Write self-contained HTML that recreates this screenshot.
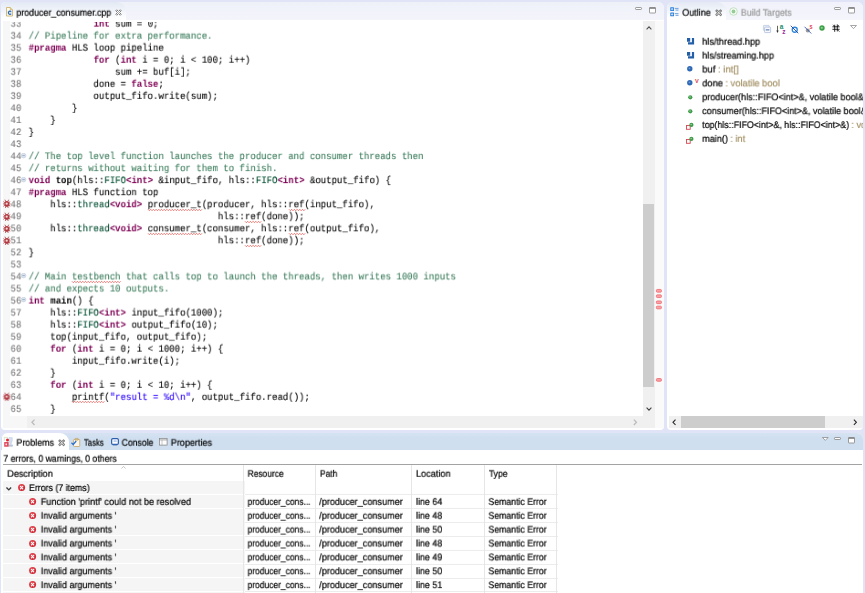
<!DOCTYPE html>
<html>
<head>
<meta charset="utf-8">
<title>producer_consumer.cpp</title>
<style>
html,body{margin:0;padding:0;}
body{width:865px;height:593px;overflow:hidden;background:#e0e4f6;font-family:"Liberation Sans",sans-serif;font-size:10px;color:#1a1a1a;position:relative;}
.abs{position:absolute;}
svg{position:absolute;overflow:visible;}
/* editor pane */
#ed{left:1.4px;top:2px;width:663.0px;height:428.1px;background:#fff;border-radius:5px 6px 4px 4px;overflow:hidden;}
#edtabbar{left:0;top:0;width:664px;height:18.2px;background:linear-gradient(#eff1f9,#f4f5fb);}
#edtab{left:0;top:0;width:124.9px;height:18.3px;background:linear-gradient(#e3e9f4,#f3f6fb 55%,#fff 90%);border-radius:4px 9px 0 0;}
.ui{left:0;top:0;will-change:transform;text-rendering:geometricPrecision;font-size:10.2px;white-space:pre;color:#080808;-webkit-text-stroke:0.22px;line-height:12px;transform-origin:0 0;}
#code{left:0;top:21px;width:643.1px;height:395.2px;overflow:hidden;}
#codein{left:0;top:-21px;}
.n,.c{position:absolute;left:0;top:0;will-change:transform;text-rendering:geometricPrecision;transform-origin:0 0;height:12.04px;line-height:12.04px;white-space:pre;font-family:"Liberation Mono",monospace;font-size:9.9px;color:#000;-webkit-text-stroke:0.12px;}
.n{color:#787878;}
b{font-weight:bold;color:#000;-webkit-text-stroke:0;}
.k{color:#7f0055;font-weight:bold;-webkit-text-stroke:0;}
.cm{color:#3f7f5f;}
.ty{color:#005032;}
.st{color:#2a00ff;}
.sq{}
.sb{background:#f0f0f0;}
.th{background:#cdcdcd;}
.mk{left:654.6px;width:4.4px;height:2.2px;border:0.7px solid #ef5860;border-radius:1.2px;background:#f7a3a7;box-sizing:content-box;}
</style>
</head>
<body>
<!-- ================= EDITOR ================= -->
<div id="ed" class="abs">
  <div id="edtabbar" class="abs"></div>
  <div id="edtab" class="abs"></div>
  <!-- annotation ruler bg -->
  <div class="abs" style="left:1.4px;top:19.4px;width:7.2px;height:406.4px;background:#f7f7f7;"></div>
  <div class="abs" style="left:8.6px;top:413.8px;width:17.2px;height:12px;background:#f7f7f7;"></div>
  <!-- file icon -->
  <svg viewBox="0 0 14 19" width="7" height="9.5" style="left:4.6px;top:5.2px"><path d="M1 1H8.5L13 5.5V18H1Z" fill="#fdfdf6" stroke="#c9ab5c" stroke-width="1.6" stroke-linejoin="round"/><path d="M8.5 1V5.5H13" fill="#f3e3a8" stroke="#c9ab5c" stroke-width="1.4"/><rect x="3" y="7" width="8.5" height="8" fill="#cfe0f2"/><path d="M10.3 9.3A3.2 3.2 0 1 0 10.3 13.7" fill="none" stroke="#2f66a8" stroke-width="2.2"/></svg>
  <!-- close icon -->
  <svg viewBox="0 0 14 14" width="7" height="7" style="left:113.6px;top:6.5px"><path d="M1.5 3.5L3.5 1.5L7 5L10.5 1.5L12.5 3.5L9 7L12.5 10.5L10.5 12.5L7 9L3.5 12.5L1.5 10.5L5 7Z" fill="#fdfdfd" stroke="#7c7c7c" stroke-width="1.9" stroke-linejoin="round"/></svg>
  <!-- min / max -->
  <svg viewBox="0 0 14 6" width="7" height="3" style="left:633.8px;top:5px"><rect x="1" y="1" width="12" height="4" rx="1.4" fill="#fff" stroke="#7d7d7d" stroke-width="1.5"/></svg>
  <svg viewBox="0 0 14 13" width="7" height="6.5" style="left:647.4px;top:5.1px"><rect x="1" y="1" width="12" height="11" rx="1" fill="#fff" stroke="#7d7d7d" stroke-width="1.5"/><rect x="1" y="1" width="12" height="2.6" fill="#7d7d7d"/></svg>
  <!-- vertical scrollbar -->
  <div class="abs sb" style="left:641.7px;top:19.4px;width:11.7px;height:406.2px;"></div>
  <div class="abs th" style="left:641.8px;top:202.2px;width:11.3px;height:182.5px;"></div>
  <svg viewBox="0 0 12 8" width="6" height="4" style="left:644.3px;top:24.2px"><path d="M1.2 6.6L6 1.8L10.8 6.6" fill="none" stroke="#505050" stroke-width="2.2"/></svg>
  <svg viewBox="0 0 12 8" width="6" height="4" style="left:644.3px;top:405.3px"><path d="M1.2 1.4L6 6.2L10.8 1.4" fill="none" stroke="#404040" stroke-width="2.2"/></svg>
  <!-- overview ruler -->
  <div class="abs" style="left:653.4px;top:19.4px;width:10px;height:406.2px;background:#fafafa;"></div>
  <svg width="6" height="400" viewBox="0 0 6 400" style="left:654.5px;top:0"><rect x="0.35" y="287.45" width="5.1" height="2.7" rx="1" fill="#f7a3a7" stroke="#ef5860" stroke-width="0.7"/><rect x="0.35" y="292.85" width="5.1" height="2.7" rx="1" fill="#f7a3a7" stroke="#ef5860" stroke-width="0.7"/><rect x="0.35" y="298.95" width="5.1" height="2.7" rx="1" fill="#f7a3a7" stroke="#ef5860" stroke-width="0.7"/><rect x="0.35" y="304.15" width="5.1" height="2.7" rx="1" fill="#f7a3a7" stroke="#ef5860" stroke-width="0.7"/><rect x="0.35" y="376.55" width="5.1" height="2.7" rx="1" fill="#f7a3a7" stroke="#ef5860" stroke-width="0.7"/></svg>
  <!-- horizontal scrollbar -->
  <div class="abs sb" style="left:25.8px;top:414.2px;width:616px;height:11.4px;"></div>
  <svg viewBox="0 0 8 12" width="4.4" height="6.6" style="left:29.6px;top:416.9px"><path d="M6.4 1.2L1.8 6L6.4 10.8" fill="none" stroke="#bcbcbc" stroke-width="2.4"/></svg>
  <svg viewBox="0 0 8 12" width="4.4" height="6.6" style="left:632px;top:416.9px"><path d="M1.6 1.2L6.2 6L1.6 10.8" fill="none" stroke="#bcbcbc" stroke-width="2.4"/></svg>
</div>

<!-- ================= OUTLINE ================= -->
<div id="ol" class="abs" style="left:667px;top:2px;width:195.6px;height:428.1px;background:#fff;border-radius:6px 6px 4px 4px;overflow:hidden;">
  <div class="abs" style="left:0;top:0;width:196px;height:18.3px;background:linear-gradient(#f0f1fa,#f5f6fc);"></div>
  <div class="abs" style="left:0;top:0;width:58.7px;height:18.3px;background:linear-gradient(#e3e9f4,#f3f6fb 50%,#fff 85%);border-radius:5px 9px 0 0;"></div>
  <!-- outline icon -->
  <svg viewBox="0 0 18 19" width="9" height="9.5" style="left:2.8px;top:5.4px"><rect x="0.5" y="0.5" width="7.5" height="7.5" rx="1" fill="#2f80d8"/><rect x="0.5" y="11" width="7.5" height="7.5" rx="1" fill="#2f80d8"/><path d="M4.25 2V6.5M2 4.25H6.5M4.25 12.5V17M2 14.75H6.5" stroke="#fff" stroke-width="1.3"/><path d="M9.5 2.8H17M11 6.2H17M9.5 13.3H17M11 16.7H17" stroke="#3f86d4" stroke-width="1.5"/></svg>
  <svg viewBox="0 0 14 14" width="7.4" height="7.4" style="left:47.9px;top:6.6px"><path d="M1.5 3.5L3.5 1.5L7 5L10.5 1.5L12.5 3.5L9 7L12.5 10.5L10.5 12.5L7 9L3.5 12.5L1.5 10.5L5 7Z" fill="#fdfdfd" stroke="#7c7c7c" stroke-width="1.9" stroke-linejoin="round"/></svg>
  <svg viewBox="0 0 18 18" width="9" height="9" style="left:61.8px;top:5px"><circle cx="9" cy="9" r="7.6" fill="#f6fbf6" stroke="#b7dbb7" stroke-width="1.6"/><circle cx="9" cy="9" r="3.8" fill="#96cd96"/></svg>
  <!-- min / max -->
  <svg viewBox="0 0 14 6" width="7" height="3" style="left:167.4px;top:5px"><rect x="1" y="1" width="12" height="4" rx="1.4" fill="#fff" stroke="#7d7d7d" stroke-width="1.5"/></svg>
  <svg viewBox="0 0 14 13" width="7" height="6.5" style="left:181.2px;top:5.1px"><rect x="1" y="1" width="12" height="11" rx="1" fill="#fff" stroke="#7d7d7d" stroke-width="1.5"/><rect x="1" y="1" width="12" height="2.6" fill="#7d7d7d"/></svg>
  <!-- toolbar -->
  <svg viewBox="0 0 16 16" width="8" height="8" style="left:96.3px;top:22.8px"><rect x="0.8" y="0.8" width="11.5" height="10" rx="1" fill="#eef2fa" stroke="#b7c6df" stroke-width="1.5"/><rect x="3.2" y="4.2" width="12" height="11" rx="1" fill="#f7f9fd" stroke="#a9bbd9" stroke-width="1.5"/><path d="M5.6 9.8H12.8" stroke="#4a6ea8" stroke-width="2"/></svg>
  <svg viewBox="0 0 20 18" width="10" height="9" style="left:109px;top:22.6px"><path d="M3 1.5V14" stroke="#333" stroke-width="1.5"/><path d="M0.6 11.2L3 15.8L5.4 11.2Z" fill="#333"/><text x="7.5" y="8.6" font-family="Liberation Sans" font-weight="bold" font-size="13" fill="#1c8c6a">a</text><text x="12.4" y="17.6" font-family="Liberation Sans" font-weight="bold" font-size="13" fill="#9a2aa0">z</text></svg>
  <svg viewBox="0 0 18 18" width="9" height="9" style="left:123.4px;top:22.8px"><circle cx="9.5" cy="9.5" r="5" fill="#fff" stroke="#2f86dc" stroke-width="2.6"/><path d="M1.5 1.5L16.5 16.5" stroke="#1f3f9a" stroke-width="1.7"/></svg>
  <svg viewBox="0 0 18 18" width="9" height="9" style="left:137px;top:22.6px"><circle cx="7.5" cy="11" r="4" fill="#9a9a9a"/><path d="M1 3.5L14.5 17" stroke="#2a4fb0" stroke-width="1.7"/><text x="11" y="7.2" font-family="Liberation Sans" font-weight="bold" font-size="9" fill="#e0304a">S</text></svg>
  <svg viewBox="0 0 12 12" width="6" height="6" style="left:152.2px;top:23.2px"><circle cx="6" cy="6" r="5.4" fill="#3da048"/><circle cx="5.6" cy="5.6" r="2.2" fill="#8fd08f"/></svg>
  <svg viewBox="0 0 16 16" width="8" height="8" style="left:165px;top:22.4px"><path d="M5.4 1.5V15.5M10.6 0.8V14.8M0.8 5.6H15.2M0.8 10.6H15.2" stroke="#111" stroke-width="1.8"/><path d="M2 1.5L5.4 5.6M10.6 10.6L15 15.5M10.6 5.6L14 2" stroke="#111" stroke-width="1.3"/></svg>
  <svg viewBox="0 0 14 8" width="7" height="4" style="left:183.2px;top:23.2px"><path d="M1 1H13L7 7.2Z" fill="#fff" stroke="#8a8a8a" stroke-width="1.5" stroke-linejoin="round"/></svg>
  <!-- item icons -->
  <svg viewBox="0 0 7.1 6.4" width="7.1" height="6.4" style="left:20.1px;top:36.3px"><path d="M0 0H3.2V3.7H0ZM4.9 0H7.1V6.4H1V4.2H4.9Z" fill="#235fa9"/></svg>
  <svg viewBox="0 0 7.1 6.4" width="7.1" height="6.4" style="left:20.1px;top:50.2px"><path d="M0 0H3.2V3.7H0ZM4.9 0H7.1V6.4H1V4.2H4.9Z" fill="#235fa9"/></svg>
  <svg viewBox="0 0 10 10" width="5.6" height="5.6" style="left:20.3px;top:64.2px"><circle cx="5" cy="5" r="4.8" fill="#2f68b4"/><circle cx="4.4" cy="4.2" r="1.6" fill="#6d9ad6"/></svg>
  <svg viewBox="0 0 10 10" width="5.6" height="5.6" style="left:20.3px;top:78.2px"><circle cx="5" cy="5" r="4.8" fill="#2f68b4"/><circle cx="4.4" cy="4.2" r="1.6" fill="#6d9ad6"/></svg>
  <div class="abs" style="left:27.9px;top:76.3px;font-size:5.6px;font-weight:bold;color:#d43a4a;line-height:6px;">V</div>
  <svg viewBox="0 0 10 10" width="4.6" height="4.6" style="left:21.1px;top:93px"><circle cx="5" cy="5" r="4.6" fill="#3f9a4a"/><circle cx="4.4" cy="4.2" r="1.7" fill="#9ad59a"/></svg>
  <svg viewBox="0 0 10 10" width="4.6" height="4.6" style="left:21.1px;top:106.9px"><circle cx="5" cy="5" r="4.6" fill="#3f9a4a"/><circle cx="4.4" cy="4.2" r="1.7" fill="#9ad59a"/></svg>
  <svg viewBox="0 0 16 16" width="8" height="8" style="left:18.6px;top:119.8px"><rect x="1" y="7" width="7.4" height="7.6" fill="#fff" stroke="#d8444f" stroke-width="1.8"/><circle cx="10.8" cy="5.8" r="4.2" fill="#3f9a4a"/><circle cx="10.2" cy="5" r="1.5" fill="#9ad59a"/></svg>
  <svg viewBox="0 0 16 16" width="8" height="8" style="left:18.6px;top:133.9px"><rect x="1" y="7" width="7.4" height="7.6" fill="#fff" stroke="#d8444f" stroke-width="1.8"/><circle cx="10.8" cy="5.8" r="4.2" fill="#3f9a4a"/><circle cx="10.2" cy="5" r="1.5" fill="#9ad59a"/></svg>
  <!-- h scrollbar -->
  <div class="abs sb" style="left:1.6px;top:414.4px;width:194px;height:11.3px;"></div>
  <div class="abs th" style="left:14px;top:414.4px;width:143.6px;height:11.3px;"></div>
  <svg viewBox="0 0 8 12" width="4.4" height="6.6" style="left:5.3px;top:416.7px"><path d="M6.4 1.2L1.8 6L6.4 10.8" fill="none" stroke="#2a2a2a" stroke-width="2"/></svg>
  <svg viewBox="0 0 8 12" width="4.4" height="6.6" style="left:186.2px;top:416.7px"><path d="M1.6 1.2L6.2 6L1.6 10.8" fill="none" stroke="#2a2a2a" stroke-width="2"/></svg>
</div>

<!-- ================= BOTTOM ================= -->
<div id="bt" class="abs" style="left:1.4px;top:432.6px;width:861.4px;height:165px;background:#fff;border-radius:6px 6px 0 0;overflow:hidden;">
  <div class="abs" style="left:0;top:0;width:862px;height:17.9px;background:linear-gradient(#d6e2f1,#cfdff0 30%,#cfdff0);"></div>
  <div class="abs" style="left:0.4px;top:0.2px;width:67px;height:17.8px;background:#fff;border-radius:5px 9px 0 0;"></div>
  <!-- problems icon -->
  <svg viewBox="0 0 18 20" width="9" height="10" style="left:2.6px;top:4.6px"><path d="M0.6 8V0.8H8" fill="none" stroke="#c9d2a4" stroke-width="1.2"/><path d="M10 1H16.6V7C16.6 9.5 14.6 10 14.6 12.5V15.5H17V18.4H9.6V15.5H11.6V12.5C11.600 10 9.8 9.5 9.8 7Z" fill="#d3e2f2" stroke="#b4c4d8" stroke-width="0.8"/><path d="M9.6 16.8H17.2V18.6H9.6Z" fill="#9fb0c4"/><rect x="0.4" y="9.8" width="9" height="9.8" rx="0.8" fill="#e2495c"/><rect x="3" y="13" width="3" height="3.4" fill="#fbe9ec"/><circle cx="7" cy="6.2" r="3" fill="#e8222c"/></svg>
  <svg viewBox="0 0 14 14" width="7.4" height="7.4" style="left:56.50px;top:6.20px"><path d="M1.5 3.5L3.5 1.5L7 5L10.5 1.5L12.5 3.5L9 7L12.5 10.5L10.5 12.5L7 9L3.5 12.5L1.5 10.5L5 7Z" fill="#fdfdfd" stroke="#7c7c7c" stroke-width="1.9" stroke-linejoin="round"/></svg>
  <!-- tasks icon -->
  <svg viewBox="0 0 19 18" width="9.5" height="9" style="left:70.10px;top:5.00px"><rect x="5" y="3" width="12.5" height="14" rx="1.5" fill="#fbf6ea" stroke="#c9a96a" stroke-width="1.7"/><rect x="8" y="0.8" width="6.5" height="3.6" rx="1" fill="#d8c08a" stroke="#b89858" stroke-width="1"/><path d="M1 9.5L4.4 13L10.5 6" fill="none" stroke="#2a6fd0" stroke-width="2.4"/></svg>
  <!-- console icon -->
  <svg viewBox="0 0 16 16" width="8" height="8" style="left:109.40px;top:5.60px"><rect x="1.3" y="1.3" width="13.4" height="11.4" rx="2.4" fill="#fff" stroke="#2c5cae" stroke-width="2.4"/><rect x="5" y="4.4" width="6.4" height="3.6" fill="#b9d0ee"/><path d="M3.5 14.6H12.5" stroke="#6f8fc6" stroke-width="1.6"/></svg>
  <!-- properties icon -->
  <svg viewBox="0 0 17 15" width="8.5" height="7.5" style="left:157.80px;top:5.80px"><rect x="0.8" y="0.8" width="15.4" height="13.4" fill="#fdfdfd" stroke="#858585" stroke-width="1.5"/><path d="M0.8 3.8H16.2" stroke="#858585" stroke-width="1.4"/><path d="M6 3.8V14.2" stroke="#a5a5a5" stroke-width="1.2"/></svg>
  <!-- view menu / min / max -->
  <svg viewBox="0 0 14 8" width="6.6" height="3.8" style="left:821.10px;top:4.30px"><path d="M1 1H13L7 7.2Z" fill="#fff" stroke="#7d7d7d" stroke-width="1.5" stroke-linejoin="round"/></svg>
  <svg viewBox="0 0 14 6" width="7" height="3" style="left:833.10px;top:4.60px"><rect x="1" y="1" width="12" height="4" rx="1.4" fill="#fff" stroke="#7d7d7d" stroke-width="1.5"/></svg>
  <svg viewBox="0 0 14 13" width="7" height="6.5" style="left:846.90px;top:4.50px"><rect x="1" y="1" width="12" height="11" rx="1" fill="#fff" stroke="#7d7d7d" stroke-width="1.5"/><rect x="1" y="1" width="12" height="2.6" fill="#7d7d7d"/></svg>
  <!-- sort arrow -->
  <svg viewBox="0 0 10 6" width="5" height="3" style="left:119.80px;top:33.00px"><path d="M0.8 5L5 1L9.2 5" fill="none" stroke="#a8a8a8" stroke-width="1.3"/></svg>
<div class="abs" style="left:2px;top:48.20px;width:241.4px;height:12.97px;background:#f5f5f5;"></div>
<div class="abs" style="left:2px;top:62.07px;width:241.4px;height:12.97px;background:#f5f5f5;"></div>
<div class="abs" style="left:2px;top:75.94px;width:241.4px;height:12.97px;background:#f5f5f5;"></div>
<div class="abs" style="left:2px;top:89.81px;width:241.4px;height:12.97px;background:#f5f5f5;"></div>
<div class="abs" style="left:2px;top:103.68px;width:241.4px;height:12.97px;background:#f5f5f5;"></div>
<div class="abs" style="left:2px;top:117.55px;width:241.4px;height:12.97px;background:#f5f5f5;"></div>
<div class="abs" style="left:2px;top:131.42px;width:241.4px;height:12.97px;background:#f5f5f5;"></div>
<div class="abs" style="left:2px;top:145.29px;width:241.4px;height:12.97px;background:#f5f5f5;"></div>
<div class="abs" style="left:2px;top:159.16px;width:241.4px;height:12.97px;background:#f5f5f5;"></div>
<div class="abs" style="left:244px;top:61.75px;width:313px;height:0.9px;background:#ececec;"></div>
<div class="abs" style="left:244px;top:75.62px;width:313px;height:0.9px;background:#ececec;"></div>
<div class="abs" style="left:244px;top:89.49px;width:313px;height:0.9px;background:#ececec;"></div>
<div class="abs" style="left:244px;top:103.36px;width:313px;height:0.9px;background:#ececec;"></div>
<div class="abs" style="left:244px;top:117.23px;width:313px;height:0.9px;background:#ececec;"></div>
<div class="abs" style="left:244px;top:131.10px;width:313px;height:0.9px;background:#ececec;"></div>
<div class="abs" style="left:244px;top:144.97px;width:313px;height:0.9px;background:#ececec;"></div>
<div class="abs" style="left:244px;top:158.84px;width:313px;height:0.9px;background:#ececec;"></div>
<div class="abs" style="left:244px;top:172.71px;width:313px;height:0.9px;background:#ececec;"></div>
<div class="abs" style="left:242.05px;top:32.60px;width:0.9px;height:140px;background:#e6e6e6;"></div>
<div class="abs" style="left:313.75px;top:32.60px;width:0.9px;height:140px;background:#e6e6e6;"></div>
<div class="abs" style="left:410.05px;top:32.60px;width:0.9px;height:140px;background:#e6e6e6;"></div>
<div class="abs" style="left:482.65px;top:32.60px;width:0.9px;height:140px;background:#e6e6e6;"></div>
<div class="abs" style="left:555.05px;top:32.60px;width:0.9px;height:140px;background:#e6e6e6;"></div>
<svg viewBox="0 0 6 4" width="5.6" height="3.6" style="left:5.10px;top:54.10px"><path d="M0.4 0.5L3 3.2L5.6 0.5" stroke="#3a3a3a" stroke-width="1.5" fill="none"/></svg>
<svg viewBox="0 0 8 8" width="7.2" height="7.2" style="left:16.20px;top:51.30px"><defs><radialGradient id="eg1" cx="0.4" cy="0.35" r="0.7"><stop offset="0" stop-color="#ee5b60"/><stop offset="1" stop-color="#c8202c"/></radialGradient></defs><circle cx="4" cy="4" r="3.9" fill="url(#eg1)"/><path d="M2.7 2.6L5.3 5.4M5.3 2.6L2.7 5.4" stroke="#fff" stroke-width="1.15" stroke-linecap="round"/></svg>
<svg viewBox="0 0 8 8" width="7.2" height="7.2" style="left:27.70px;top:65.40px"><defs><radialGradient id="eg2" cx="0.4" cy="0.35" r="0.7"><stop offset="0" stop-color="#ee5b60"/><stop offset="1" stop-color="#c8202c"/></radialGradient></defs><circle cx="4" cy="4" r="3.9" fill="url(#eg2)"/><path d="M2.7 2.6L5.3 5.4M5.3 2.6L2.7 5.4" stroke="#fff" stroke-width="1.15" stroke-linecap="round"/></svg>
<svg viewBox="0 0 8 8" width="7.2" height="7.2" style="left:27.70px;top:79.27px"><defs><radialGradient id="eg3" cx="0.4" cy="0.35" r="0.7"><stop offset="0" stop-color="#ee5b60"/><stop offset="1" stop-color="#c8202c"/></radialGradient></defs><circle cx="4" cy="4" r="3.9" fill="url(#eg3)"/><path d="M2.7 2.6L5.3 5.4M5.3 2.6L2.7 5.4" stroke="#fff" stroke-width="1.15" stroke-linecap="round"/></svg>
<svg viewBox="0 0 8 8" width="7.2" height="7.2" style="left:27.70px;top:93.14px"><defs><radialGradient id="eg4" cx="0.4" cy="0.35" r="0.7"><stop offset="0" stop-color="#ee5b60"/><stop offset="1" stop-color="#c8202c"/></radialGradient></defs><circle cx="4" cy="4" r="3.9" fill="url(#eg4)"/><path d="M2.7 2.6L5.3 5.4M5.3 2.6L2.7 5.4" stroke="#fff" stroke-width="1.15" stroke-linecap="round"/></svg>
<svg viewBox="0 0 8 8" width="7.2" height="7.2" style="left:27.70px;top:107.01px"><defs><radialGradient id="eg5" cx="0.4" cy="0.35" r="0.7"><stop offset="0" stop-color="#ee5b60"/><stop offset="1" stop-color="#c8202c"/></radialGradient></defs><circle cx="4" cy="4" r="3.9" fill="url(#eg5)"/><path d="M2.7 2.6L5.3 5.4M5.3 2.6L2.7 5.4" stroke="#fff" stroke-width="1.15" stroke-linecap="round"/></svg>
<svg viewBox="0 0 8 8" width="7.2" height="7.2" style="left:27.70px;top:120.88px"><defs><radialGradient id="eg6" cx="0.4" cy="0.35" r="0.7"><stop offset="0" stop-color="#ee5b60"/><stop offset="1" stop-color="#c8202c"/></radialGradient></defs><circle cx="4" cy="4" r="3.9" fill="url(#eg6)"/><path d="M2.7 2.6L5.3 5.4M5.3 2.6L2.7 5.4" stroke="#fff" stroke-width="1.15" stroke-linecap="round"/></svg>
<svg viewBox="0 0 8 8" width="7.2" height="7.2" style="left:27.70px;top:134.75px"><defs><radialGradient id="eg7" cx="0.4" cy="0.35" r="0.7"><stop offset="0" stop-color="#ee5b60"/><stop offset="1" stop-color="#c8202c"/></radialGradient></defs><circle cx="4" cy="4" r="3.9" fill="url(#eg7)"/><path d="M2.7 2.6L5.3 5.4M5.3 2.6L2.7 5.4" stroke="#fff" stroke-width="1.15" stroke-linecap="round"/></svg>
<svg viewBox="0 0 8 8" width="7.2" height="7.2" style="left:27.70px;top:148.62px"><defs><radialGradient id="eg8" cx="0.4" cy="0.35" r="0.7"><stop offset="0" stop-color="#ee5b60"/><stop offset="1" stop-color="#c8202c"/></radialGradient></defs><circle cx="4" cy="4" r="3.9" fill="url(#eg8)"/><path d="M2.7 2.6L5.3 5.4M5.3 2.6L2.7 5.4" stroke="#fff" stroke-width="1.15" stroke-linecap="round"/></svg>
  <div class="abs" style="left:1.6px;top:31.60px;width:859px;height:1px;background:#a3a3a3;"></div>
</div>
<!-- ================= TEXT OVERLAYS (integer-aligned) ================= -->
<div id="code" class="abs"><div id="codein" class="abs">
<span class="n" style="transform:translate(10.50px,18.59px) scale(0.9127,1.000)">33</span><span class="c" style="transform:translate(28.60px,18.59px) scale(0.9127,1.000)">            <span class="k">int</span> sum = 0;</span>
<span class="n" style="transform:translate(10.50px,30.63px) scale(0.9127,1.000)">34</span><span class="c" style="transform:translate(28.60px,30.63px) scale(0.9127,1.000)"><span class="cm">// Pipeline for extra performance.</span></span>
<span class="n" style="transform:translate(10.50px,42.67px) scale(0.9127,1.000)">35</span><span class="c" style="transform:translate(28.60px,42.67px) scale(0.9127,1.000)"><span class="k">#pragma</span> HLS loop pipeline</span>
<span class="n" style="transform:translate(10.50px,54.71px) scale(0.9127,1.000)">36</span><span class="c" style="transform:translate(28.60px,54.71px) scale(0.9127,1.000)">            <span class="k">for</span> (<span class="k">int</span> i = 0; i &lt; 100; i++)</span>
<span class="n" style="transform:translate(10.50px,66.75px) scale(0.9127,1.000)">37</span><span class="c" style="transform:translate(28.60px,66.75px) scale(0.9127,1.000)">                sum += buf[i];</span>
<span class="n" style="transform:translate(10.50px,78.79px) scale(0.9127,1.000)">38</span><span class="c" style="transform:translate(28.60px,78.79px) scale(0.9127,1.000)">            done = <span class="k">false</span>;</span>
<span class="n" style="transform:translate(10.50px,90.83px) scale(0.9127,1.000)">39</span><span class="c" style="transform:translate(28.60px,90.83px) scale(0.9127,1.000)">            output_fifo.write(sum);</span>
<span class="n" style="transform:translate(10.50px,102.87px) scale(0.9127,1.000)">40</span><span class="c" style="transform:translate(28.60px,102.87px) scale(0.9127,1.000)">        }</span>
<span class="n" style="transform:translate(10.50px,114.91px) scale(0.9127,1.000)">41</span><span class="c" style="transform:translate(28.60px,114.91px) scale(0.9127,1.000)">    }</span>
<span class="n" style="transform:translate(10.50px,126.95px) scale(0.9127,1.000)">42</span><span class="c" style="transform:translate(28.60px,126.95px) scale(0.9127,1.000)">}</span>
<span class="n" style="transform:translate(10.50px,138.99px) scale(0.9127,1.000)">43</span>
<span class="n" style="transform:translate(10.50px,151.03px) scale(0.9127,1.000)">44</span><svg class="fold" style="left:21.3px;top:152.53px" viewBox="0 0 10 10" width="5.2" height="5.2"><circle cx="5" cy="5" r="4.5" fill="#dce5f0" stroke="#b7c4d8" stroke-width="1"/><path d="M2.6 5H7.4" stroke="#7f93b0" stroke-width="1.3"/></svg><span class="c" style="transform:translate(28.60px,151.03px) scale(0.9127,1.000)"><span class="cm">// The top level function launches the producer and consumer threads then</span></span>
<span class="n" style="transform:translate(10.50px,163.07px) scale(0.9127,1.000)">45</span><span class="c" style="transform:translate(28.60px,163.07px) scale(0.9127,1.000)"><span class="cm">// returns without waiting for them to finish.</span></span>
<span class="n" style="transform:translate(10.50px,175.11px) scale(0.9127,1.000)">46</span><svg class="fold" style="left:21.3px;top:176.61px" viewBox="0 0 10 10" width="5.2" height="5.2"><circle cx="5" cy="5" r="4.5" fill="#dce5f0" stroke="#b7c4d8" stroke-width="1"/><path d="M2.6 5H7.4" stroke="#7f93b0" stroke-width="1.3"/></svg><span class="c" style="transform:translate(28.60px,175.11px) scale(0.9127,1.000)"><span class="k">void</span> <b>top</b>(hls::<span class="ty">FIFO</span><span class="k">&lt;int&gt;</span> &amp;input_fifo, hls::<span class="ty">FIFO</span><span class="k">&lt;int&gt;</span> &amp;output_fifo) {</span>
<span class="n" style="transform:translate(10.50px,187.15px) scale(0.9127,1.000)">47</span><span class="c" style="transform:translate(28.60px,187.15px) scale(0.9127,1.000)"><span class="k">#pragma</span> HLS function top</span>
<svg class="bug" style="left:2.7px;top:199.49px" viewBox="-0.4 0 7.6 9.4" width="7.6" height="9.4"><path d="M2.4 2.6L1.5 0.7M4.4 2.6L5.3 0.7M1.4 3.7L0 2.7M5.4 3.7L6.8 2.7M1.1 4.9H-0.3M5.7 4.9H7.1M1.4 6.1L0 7.3M5.4 6.1L6.8 7.3M2.6 7.4L2 8.9M4.2 7.4L4.8 8.9" stroke="#a8323a" stroke-width="0.8" fill="none"/><ellipse cx="3.4" cy="4.9" rx="2.5" ry="2.9" fill="#b23840"/><circle cx="3.3" cy="4.7" r="1.15" fill="#f3d6d6"/></svg><span class="n" style="transform:translate(10.50px,199.19px) scale(0.9127,1.000)">48</span><span class="c" style="transform:translate(28.60px,199.19px) scale(0.9127,1.000)">    hls::<span class="ty">thread</span><span class="k">&lt;void&gt;</span> <span class="sq">producer_t</span>(producer, hls::<span class="sq">ref</span>(input_fifo),</span><svg width="54.20" height="2" style="left:147.84px;top:208.59px"><polyline points="0.00,0.30 1.35,1.70 2.70,0.30 4.05,1.70 5.40,0.30 6.75,1.70 8.10,0.30 9.45,1.70 10.80,0.30 12.15,1.70 13.50,0.30 14.85,1.70 16.20,0.30 17.55,1.70 18.90,0.30 20.25,1.70 21.60,0.30 22.95,1.70 24.30,0.30 25.65,1.70 27.00,0.30 28.35,1.70 29.70,0.30 31.05,1.70 32.40,0.30 33.75,1.70 35.10,0.30 36.45,1.70 37.80,0.30 39.15,1.70 40.50,0.30 41.85,1.70 43.20,0.30 44.55,1.70 45.90,0.30 47.25,1.70 48.60,0.30 49.95,1.70 51.30,0.30 52.65,1.70 54.00,0.30" fill="none" stroke="#e8514a" stroke-width="0.75"/></svg><svg width="16.26" height="2" style="left:288.76px;top:208.59px"><polyline points="0.00,0.30 1.35,1.70 2.70,0.30 4.05,1.70 5.40,0.30 6.75,1.70 8.10,0.30 9.45,1.70 10.80,0.30 12.15,1.70 13.50,0.30 14.85,1.70 16.20,0.30" fill="none" stroke="#e8514a" stroke-width="0.75"/></svg>
<svg class="bug" style="left:2.7px;top:211.53px" viewBox="-0.4 0 7.6 9.4" width="7.6" height="9.4"><path d="M2.4 2.6L1.5 0.7M4.4 2.6L5.3 0.7M1.4 3.7L0 2.7M5.4 3.7L6.8 2.7M1.1 4.9H-0.3M5.7 4.9H7.1M1.4 6.1L0 7.3M5.4 6.1L6.8 7.3M2.6 7.4L2 8.9M4.2 7.4L4.8 8.9" stroke="#a8323a" stroke-width="0.8" fill="none"/><ellipse cx="3.4" cy="4.9" rx="2.5" ry="2.9" fill="#b23840"/><circle cx="3.3" cy="4.7" r="1.15" fill="#f3d6d6"/></svg><span class="n" style="transform:translate(10.50px,211.23px) scale(0.9127,1.000)">49</span><span class="c" style="transform:translate(28.60px,211.23px) scale(0.9127,1.000)">                                   hls::<span class="sq">ref</span>(done));</span><svg width="16.26" height="2" style="left:245.40px;top:220.63px"><polyline points="0.00,0.30 1.35,1.70 2.70,0.30 4.05,1.70 5.40,0.30 6.75,1.70 8.10,0.30 9.45,1.70 10.80,0.30 12.15,1.70 13.50,0.30 14.85,1.70 16.20,0.30" fill="none" stroke="#e8514a" stroke-width="0.75"/></svg>
<svg class="bug" style="left:2.7px;top:223.57px" viewBox="-0.4 0 7.6 9.4" width="7.6" height="9.4"><path d="M2.4 2.6L1.5 0.7M4.4 2.6L5.3 0.7M1.4 3.7L0 2.7M5.4 3.7L6.8 2.7M1.1 4.9H-0.3M5.7 4.9H7.1M1.4 6.1L0 7.3M5.4 6.1L6.8 7.3M2.6 7.4L2 8.9M4.2 7.4L4.8 8.9" stroke="#a8323a" stroke-width="0.8" fill="none"/><ellipse cx="3.4" cy="4.9" rx="2.5" ry="2.9" fill="#b23840"/><circle cx="3.3" cy="4.7" r="1.15" fill="#f3d6d6"/></svg><span class="n" style="transform:translate(10.50px,223.27px) scale(0.9127,1.000)">50</span><span class="c" style="transform:translate(28.60px,223.27px) scale(0.9127,1.000)">    hls::<span class="ty">thread</span><span class="k">&lt;void&gt;</span> <span class="sq">consumer_t</span>(consumer, hls::<span class="sq">ref</span>(output_fifo),</span><svg width="54.20" height="2" style="left:147.84px;top:232.67px"><polyline points="0.00,0.30 1.35,1.70 2.70,0.30 4.05,1.70 5.40,0.30 6.75,1.70 8.10,0.30 9.45,1.70 10.80,0.30 12.15,1.70 13.50,0.30 14.85,1.70 16.20,0.30 17.55,1.70 18.90,0.30 20.25,1.70 21.60,0.30 22.95,1.70 24.30,0.30 25.65,1.70 27.00,0.30 28.35,1.70 29.70,0.30 31.05,1.70 32.40,0.30 33.75,1.70 35.10,0.30 36.45,1.70 37.80,0.30 39.15,1.70 40.50,0.30 41.85,1.70 43.20,0.30 44.55,1.70 45.90,0.30 47.25,1.70 48.60,0.30 49.95,1.70 51.30,0.30 52.65,1.70 54.00,0.30" fill="none" stroke="#e8514a" stroke-width="0.75"/></svg><svg width="16.26" height="2" style="left:288.76px;top:232.67px"><polyline points="0.00,0.30 1.35,1.70 2.70,0.30 4.05,1.70 5.40,0.30 6.75,1.70 8.10,0.30 9.45,1.70 10.80,0.30 12.15,1.70 13.50,0.30 14.85,1.70 16.20,0.30" fill="none" stroke="#e8514a" stroke-width="0.75"/></svg>
<svg class="bug" style="left:2.7px;top:235.61px" viewBox="-0.4 0 7.6 9.4" width="7.6" height="9.4"><path d="M2.4 2.6L1.5 0.7M4.4 2.6L5.3 0.7M1.4 3.7L0 2.7M5.4 3.7L6.8 2.7M1.1 4.9H-0.3M5.7 4.9H7.1M1.4 6.1L0 7.3M5.4 6.1L6.8 7.3M2.6 7.4L2 8.9M4.2 7.4L4.8 8.9" stroke="#a8323a" stroke-width="0.8" fill="none"/><ellipse cx="3.4" cy="4.9" rx="2.5" ry="2.9" fill="#b23840"/><circle cx="3.3" cy="4.7" r="1.15" fill="#f3d6d6"/></svg><span class="n" style="transform:translate(10.50px,235.31px) scale(0.9127,1.000)">51</span><span class="c" style="transform:translate(28.60px,235.31px) scale(0.9127,1.000)">                                   hls::<span class="sq">ref</span>(done));</span><svg width="16.26" height="2" style="left:245.40px;top:244.71px"><polyline points="0.00,0.30 1.35,1.70 2.70,0.30 4.05,1.70 5.40,0.30 6.75,1.70 8.10,0.30 9.45,1.70 10.80,0.30 12.15,1.70 13.50,0.30 14.85,1.70 16.20,0.30" fill="none" stroke="#e8514a" stroke-width="0.75"/></svg>
<span class="n" style="transform:translate(10.50px,247.35px) scale(0.9127,1.000)">52</span><span class="c" style="transform:translate(28.60px,247.35px) scale(0.9127,1.000)">}</span>
<span class="n" style="transform:translate(10.50px,259.39px) scale(0.9127,1.000)">53</span>
<span class="n" style="transform:translate(10.50px,271.43px) scale(0.9127,1.000)">54</span><svg class="fold" style="left:21.3px;top:272.93px" viewBox="0 0 10 10" width="5.2" height="5.2"><circle cx="5" cy="5" r="4.5" fill="#dce5f0" stroke="#b7c4d8" stroke-width="1"/><path d="M2.6 5H7.4" stroke="#7f93b0" stroke-width="1.3"/></svg><span class="c" style="transform:translate(28.60px,271.43px) scale(0.9127,1.000)"><span class="cm">// Main <span class="sq">testbench</span> that calls top to launch the threads, then writes 1000 inputs</span></span><svg width="48.78" height="2" style="left:71.96px;top:280.83px"><polyline points="0.00,0.30 1.35,1.70 2.70,0.30 4.05,1.70 5.40,0.30 6.75,1.70 8.10,0.30 9.45,1.70 10.80,0.30 12.15,1.70 13.50,0.30 14.85,1.70 16.20,0.30 17.55,1.70 18.90,0.30 20.25,1.70 21.60,0.30 22.95,1.70 24.30,0.30 25.65,1.70 27.00,0.30 28.35,1.70 29.70,0.30 31.05,1.70 32.40,0.30 33.75,1.70 35.10,0.30 36.45,1.70 37.80,0.30 39.15,1.70 40.50,0.30 41.85,1.70 43.20,0.30 44.55,1.70 45.90,0.30 47.25,1.70 48.60,0.30" fill="none" stroke="#e8514a" stroke-width="0.75"/></svg>
<span class="n" style="transform:translate(10.50px,283.47px) scale(0.9127,1.000)">55</span><span class="c" style="transform:translate(28.60px,283.47px) scale(0.9127,1.000)"><span class="cm">// and expects 10 outputs.</span></span>
<span class="n" style="transform:translate(10.50px,295.51px) scale(0.9127,1.000)">56</span><svg class="fold" style="left:21.3px;top:297.01px" viewBox="0 0 10 10" width="5.2" height="5.2"><circle cx="5" cy="5" r="4.5" fill="#dce5f0" stroke="#b7c4d8" stroke-width="1"/><path d="M2.6 5H7.4" stroke="#7f93b0" stroke-width="1.3"/></svg><span class="c" style="transform:translate(28.60px,295.51px) scale(0.9127,1.000)"><span class="k">int</span> <b>main</b>() {</span>
<span class="n" style="transform:translate(10.50px,307.55px) scale(0.9127,1.000)">57</span><span class="c" style="transform:translate(28.60px,307.55px) scale(0.9127,1.000)">    hls::<span class="ty">FIFO</span><span class="k">&lt;int&gt;</span> input_fifo(1000);</span>
<span class="n" style="transform:translate(10.50px,319.59px) scale(0.9127,1.000)">58</span><span class="c" style="transform:translate(28.60px,319.59px) scale(0.9127,1.000)">    hls::<span class="ty">FIFO</span><span class="k">&lt;int&gt;</span> output_fifo(10);</span>
<span class="n" style="transform:translate(10.50px,331.63px) scale(0.9127,1.000)">59</span><span class="c" style="transform:translate(28.60px,331.63px) scale(0.9127,1.000)">    top(input_fifo, output_fifo);</span>
<span class="n" style="transform:translate(10.50px,343.67px) scale(0.9127,1.000)">60</span><span class="c" style="transform:translate(28.60px,343.67px) scale(0.9127,1.000)">    <span class="k">for</span> (<span class="k">int</span> i = 0; i &lt; 1000; i++) {</span>
<span class="n" style="transform:translate(10.50px,355.71px) scale(0.9127,1.000)">61</span><span class="c" style="transform:translate(28.60px,355.71px) scale(0.9127,1.000)">        input_fifo.write(i);</span>
<span class="n" style="transform:translate(10.50px,367.75px) scale(0.9127,1.000)">62</span><span class="c" style="transform:translate(28.60px,367.75px) scale(0.9127,1.000)">    }</span>
<span class="n" style="transform:translate(10.50px,379.79px) scale(0.9127,1.000)">63</span><span class="c" style="transform:translate(28.60px,379.79px) scale(0.9127,1.000)">    <span class="k">for</span> (<span class="k">int</span> i = 0; i &lt; 10; i++) {</span>
<svg class="bug" style="left:2.7px;top:392.13px" viewBox="-0.4 0 7.6 9.4" width="7.6" height="9.4"><path d="M2.4 2.6L1.5 0.7M4.4 2.6L5.3 0.7M1.4 3.7L0 2.7M5.4 3.7L6.8 2.7M1.1 4.9H-0.3M5.7 4.9H7.1M1.4 6.1L0 7.3M5.4 6.1L6.8 7.3M2.6 7.4L2 8.9M4.2 7.4L4.8 8.9" stroke="#a8323a" stroke-width="0.8" fill="none"/><ellipse cx="3.4" cy="4.9" rx="2.5" ry="2.9" fill="#b23840"/><circle cx="3.3" cy="4.7" r="1.15" fill="#f3d6d6"/></svg><span class="n" style="transform:translate(10.50px,391.83px) scale(0.9127,1.000)">64</span><span class="c" style="transform:translate(28.60px,391.83px) scale(0.9127,1.000)">        <span class="sq">printf</span>(<span class="st">"result = %d\n"</span>, output_fifo.read());</span><svg width="32.52" height="2" style="left:71.96px;top:401.23px"><polyline points="0.00,0.30 1.35,1.70 2.70,0.30 4.05,1.70 5.40,0.30 6.75,1.70 8.10,0.30 9.45,1.70 10.80,0.30 12.15,1.70 13.50,0.30 14.85,1.70 16.20,0.30 17.55,1.70 18.90,0.30 20.25,1.70 21.60,0.30 22.95,1.70 24.30,0.30 25.65,1.70 27.00,0.30 28.35,1.70 29.70,0.30 31.05,1.70 32.40,0.30" fill="none" stroke="#e8514a" stroke-width="0.75"/></svg>
<span class="n" style="transform:translate(10.50px,403.87px) scale(0.9127,1.000)">65</span><span class="c" style="transform:translate(28.60px,403.87px) scale(0.9127,1.000)">    }</span>
</div><div class="abs" style="left:10px;top:0;width:634px;height:0.75px;background:#fff;"></div><div class="abs" style="left:2.8px;top:0;width:7.2px;height:0.75px;background:#f7f7f7;"></div></div>
<div class="abs" style="left:0;top:0;width:865px;height:593px;overflow:hidden;">
<div class="abs ui" style="font-size:9.60px;transform:translate(16.40px,7.70px) scale(0.9214,1.000);">producer_consumer.cpp</div>
<div class="abs ui" style="font-size:9.60px;transform:translate(16.40px,437.70px) scale(0.9273,1.000);">Problems</div>
<div class="abs ui" style="font-size:9.60px;transform:translate(83.90px,437.70px) scale(0.8069,1.000);">Tasks</div>
<div class="abs ui" style="font-size:9.60px;transform:translate(121.60px,437.70px) scale(0.9028,1.000);">Console</div>
<div class="abs ui" style="font-size:9.60px;transform:translate(170.80px,437.70px) scale(0.9416,1.000);">Properties</div>
<div class="abs ui" style="font-size:9.60px;transform:translate(3.40px,453.75px) scale(0.9082,1.000);">7 errors, 0 warnings, 0 others</div>
<div class="abs ui" style="font-size:9.60px;transform:translate(7.20px,468.80px) scale(0.9496,1.000);">Description</div>
<div class="abs ui" style="font-size:9.60px;transform:translate(247.60px,468.80px) scale(0.8762,1.000);">Resource</div>
<div class="abs ui" style="font-size:9.60px;transform:translate(320.00px,468.80px) scale(0.8710,1.000);">Path</div>
<div class="abs ui" style="font-size:9.60px;transform:translate(416.00px,468.80px) scale(0.9533,1.000);">Location</div>
<div class="abs ui" style="font-size:9.60px;transform:translate(488.90px,468.80px) scale(0.8937,1.000);">Type</div>
<div class="abs ui" style="font-size:9.60px;transform:translate(29.00px,482.95px) scale(0.9178,1.000);">Errors (7 items)</div>
<div class="abs ui" style="font-size:9.60px;transform:translate(40.80px,496.85px) scale(0.9487,1.000);">Function 'printf' could not be resolved</div>
<div class="abs ui" style="font-size:9.60px;transform:translate(247.60px,496.85px) scale(0.8810,1.000);">producer_cons...</div>
<div class="abs ui" style="font-size:9.60px;transform:translate(319.20px,496.85px) scale(0.9495,1.000);">/producer_consumer</div>
<div class="abs ui" style="font-size:9.60px;transform:translate(416.00px,496.85px) scale(0.9297,1.000);">line 64</div>
<div class="abs ui" style="font-size:9.60px;transform:translate(488.40px,496.85px) scale(0.9091,1.000);">Semantic Error</div>
<div class="abs ui" style="font-size:9.60px;transform:translate(40.80px,510.72px) scale(0.9405,1.000);">Invalid arguments '</div>
<div class="abs ui" style="font-size:9.60px;transform:translate(247.60px,510.72px) scale(0.8810,1.000);">producer_cons...</div>
<div class="abs ui" style="font-size:9.60px;transform:translate(319.20px,510.72px) scale(0.9495,1.000);">/producer_consumer</div>
<div class="abs ui" style="font-size:9.60px;transform:translate(416.00px,510.72px) scale(0.9297,1.000);">line 48</div>
<div class="abs ui" style="font-size:9.60px;transform:translate(488.40px,510.72px) scale(0.9091,1.000);">Semantic Error</div>
<div class="abs ui" style="font-size:9.60px;transform:translate(40.80px,524.59px) scale(0.9405,1.000);">Invalid arguments '</div>
<div class="abs ui" style="font-size:9.60px;transform:translate(247.60px,524.59px) scale(0.8810,1.000);">producer_cons...</div>
<div class="abs ui" style="font-size:9.60px;transform:translate(319.20px,524.59px) scale(0.9495,1.000);">/producer_consumer</div>
<div class="abs ui" style="font-size:9.60px;transform:translate(416.00px,524.59px) scale(0.9297,1.000);">line 50</div>
<div class="abs ui" style="font-size:9.60px;transform:translate(488.40px,524.59px) scale(0.9091,1.000);">Semantic Error</div>
<div class="abs ui" style="font-size:9.60px;transform:translate(40.80px,538.46px) scale(0.9405,1.000);">Invalid arguments '</div>
<div class="abs ui" style="font-size:9.60px;transform:translate(247.60px,538.46px) scale(0.8810,1.000);">producer_cons...</div>
<div class="abs ui" style="font-size:9.60px;transform:translate(319.20px,538.46px) scale(0.9495,1.000);">/producer_consumer</div>
<div class="abs ui" style="font-size:9.60px;transform:translate(416.00px,538.46px) scale(0.9297,1.000);">line 48</div>
<div class="abs ui" style="font-size:9.60px;transform:translate(488.40px,538.46px) scale(0.9091,1.000);">Semantic Error</div>
<div class="abs ui" style="font-size:9.60px;transform:translate(40.80px,552.33px) scale(0.9405,1.000);">Invalid arguments '</div>
<div class="abs ui" style="font-size:9.60px;transform:translate(247.60px,552.33px) scale(0.8810,1.000);">producer_cons...</div>
<div class="abs ui" style="font-size:9.60px;transform:translate(319.20px,552.33px) scale(0.9495,1.000);">/producer_consumer</div>
<div class="abs ui" style="font-size:9.60px;transform:translate(416.00px,552.33px) scale(0.9297,1.000);">line 49</div>
<div class="abs ui" style="font-size:9.60px;transform:translate(488.40px,552.33px) scale(0.9091,1.000);">Semantic Error</div>
<div class="abs ui" style="font-size:9.60px;transform:translate(40.80px,566.20px) scale(0.9405,1.000);">Invalid arguments '</div>
<div class="abs ui" style="font-size:9.60px;transform:translate(247.60px,566.20px) scale(0.8810,1.000);">producer_cons...</div>
<div class="abs ui" style="font-size:9.60px;transform:translate(319.20px,566.20px) scale(0.9495,1.000);">/producer_consumer</div>
<div class="abs ui" style="font-size:9.60px;transform:translate(416.00px,566.20px) scale(0.9297,1.000);">line 50</div>
<div class="abs ui" style="font-size:9.60px;transform:translate(488.40px,566.20px) scale(0.9091,1.000);">Semantic Error</div>
<div class="abs ui" style="font-size:9.60px;transform:translate(40.80px,580.07px) scale(0.9405,1.000);">Invalid arguments '</div>
<div class="abs ui" style="font-size:9.60px;transform:translate(247.60px,580.07px) scale(0.8810,1.000);">producer_cons...</div>
<div class="abs ui" style="font-size:9.60px;transform:translate(319.20px,580.07px) scale(0.9495,1.000);">/producer_consumer</div>
<div class="abs ui" style="font-size:9.60px;transform:translate(416.00px,580.07px) scale(0.9297,1.000);">line 51</div>
<div class="abs ui" style="font-size:9.60px;transform:translate(488.40px,580.07px) scale(0.9091,1.000);">Semantic Error</div>
</div>
<div class="abs" style="left:667px;top:0;width:195.6px;height:430px;overflow:hidden;">
<div class="abs ui" style="font-size:9.60px;transform:translate(15.20px,7.70px) scale(0.9403,1.000);">Outline</div>
<div class="abs ui" style="font-size:9.60px;transform:translate(73.90px,7.70px) scale(0.9183,1.000);color:#9b9b9b;">Build Targets</div>
<div class="abs ui" style="font-size:9.60px;transform:translate(35.20px,36.75px) scale(0.9516,1.000);">hls/thread.hpp</div>
<div class="abs ui" style="font-size:9.60px;transform:translate(35.20px,50.62px) scale(0.9476,1.000);">hls/streaming.hpp</div>
<div class="abs ui" style="font-size:9.60px;transform:translate(35.20px,64.49px) scale(0.9886,1.000);">buf<span style="color:#a6956a"> : int[]</span></div>
<div class="abs ui" style="font-size:9.60px;transform:translate(35.20px,78.36px) scale(0.9693,1.000);">done<span style="color:#a6956a"> : volatile bool</span></div>
<div class="abs ui" style="font-size:9.60px;transform:translate(35.20px,92.23px) scale(0.9468,1.000);">producer(hls::FIFO&lt;int&gt;&amp;, volatile bool&amp;)<span style="color:#a6956a"> : void</span></div>
<div class="abs ui" style="font-size:9.60px;transform:translate(35.20px,106.10px) scale(0.9407,1.000);">consumer(hls::FIFO&lt;int&gt;&amp;, volatile bool&amp;)<span style="color:#a6956a"> : void</span></div>
<div class="abs ui" style="font-size:9.60px;transform:translate(35.20px,119.97px) scale(0.9215,1.000);">top(hls::FIFO&lt;int&gt;&amp;, hls::FIFO&lt;int&gt;&amp;)<span style="color:#a6956a"> : void</span></div>
<div class="abs ui" style="font-size:9.60px;transform:translate(35.20px,133.84px) scale(0.9461,1.000);">main()<span style="color:#a6956a"> : int</span></div>
</div>
</body>
</html>
